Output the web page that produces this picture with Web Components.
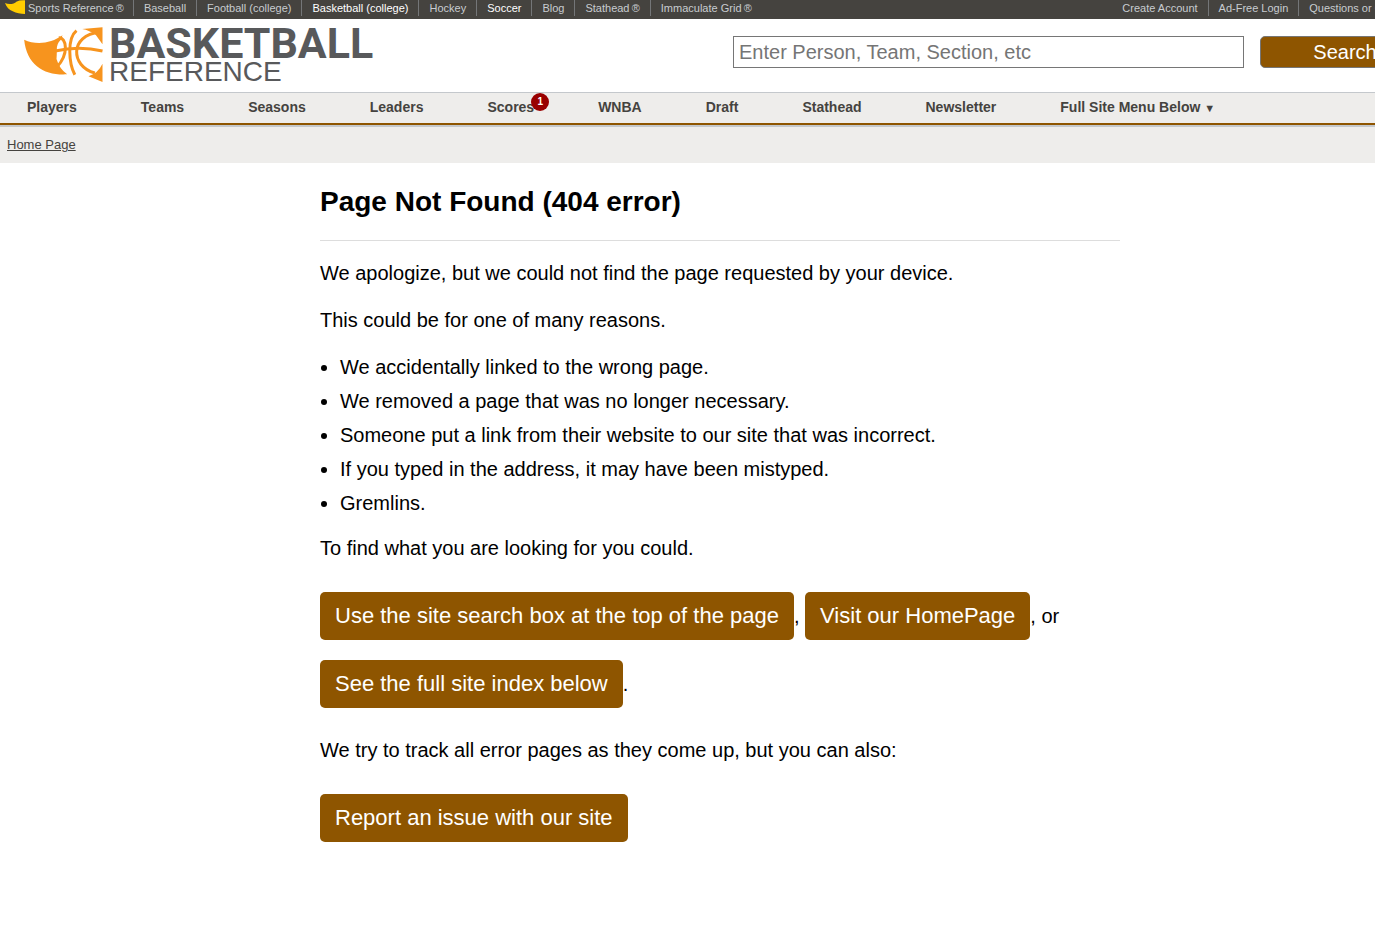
<!DOCTYPE html>
<html lang="en">
<head>
<meta charset="utf-8">
<title>Page Not Found (404 error) | Basketball-Reference.com</title>
<style>
  html { overflow-x: hidden; }
  body { margin: 0; background: #fff; color: #000; font-family: "Liberation Sans", Arial, Helvetica, sans-serif; overflow-x: hidden; }
</style>
</head>
<body>
<site-page></site-page>

<script>
const define = (name, html) => {
  const template = document.createElement('template');
  template.innerHTML = html;
  customElements.define(name, class extends HTMLElement {
    constructor() {
      super();
      this.attachShadow({ mode: 'open' }).append(template.content.cloneNode(true));
    }
  });
};

define('network-bar', `
  <style>
    :host { display: flex; justify-content: space-between; background: #45433f; height: 19px; font-size: 11px; line-height: 16px; white-space: nowrap; }
    ul { display: flex; list-style: none; margin: 0; padding: 0; }
    li { height: 16px; padding: 0 10px; }
    li + li { border-left: 1px solid #747678; }
    li.brand { display: flex; gap: 3px; padding: 0 9px 0 5px; }
    .account li:last-child { padding-right: 6px; }
    svg { display: block; width: 20px; height: 14px; }
    a { color: #c8ccd0; text-decoration: none; }
    a.on { color: #fff; }
  </style>
  <ul>
    <li class="brand"><svg viewBox="0 0 60 42" aria-hidden="true"><path fill="#fc0" d="M0 9C12 15 28 12 34 5Q44 0 60 1V42C34 40 8 34 0 9Z"/></svg><a href="#">Sports Reference&thinsp;®</a></li>
    <li><a href="#">Baseball</a></li>
    <li><a href="#">Football (college)</a></li>
    <li><a class="on" href="#">Basketball (college)</a></li>
    <li><a href="#">Hockey</a></li>
    <li><a class="on" href="#">Soccer</a></li>
    <li><a href="#">Blog</a></li>
    <li><a href="#">Stathead&thinsp;®</a></li>
    <li><a href="#">Immaculate Grid&thinsp;®</a></li>
  </ul>
  <ul class="account">
    <li><a href="#">Create Account</a></li>
    <li><a href="#">Ad-Free Login</a></li>
    <li><a href="#">Questions or Comments?</a></li>
  </ul>`);

define('site-logo', `
  <style>
    :host { display: block; }
    a { display: flex; gap: 6px; color: #58595b; text-decoration: none; white-space: nowrap; }
    svg { display: block; width: 79px; height: 56px; flex: none; }
    span { display: grid; align-content: start; }
    b { font: 700 43px/33px Roboto, sans-serif; }
    i { font: 400 28px/24px "Liberation Sans", sans-serif; }
  </style>
  <a href="#" aria-label="Basketball Reference home">
    <svg viewBox="0 0 236 168" aria-hidden="true">
      <path fill="#f7941e" d="M0 38C35 55 80 50 115 25L110 38Q97 50 98 68Q98 84 97 96Q106 126 129 142C62 146 8 116 0 38Z"/>
      <g fill="none" stroke="#f7941e" stroke-width="9">
        <path d="M104 32C126 30 136 80 98 120"/>
        <path d="M157 11C128 34 134 110 152 143"/>
        <path d="M226 16C136 24 138 118 212 138"/>
        <path d="M93 72Q165 56 235 72"/>
      </g>
      <path fill="#f7941e" d="M174 6L235 1V52L215 24Q196 10 174 6ZM235 110V165L193 148Q222 138 235 110Z"/>
    </svg>
    <span><b>BASKETBALL</b><i>REFERENCE</i></span>
  </a>`);

define('site-search', `
  <style>
    :host { display: block; width: 697px; }
    form { display: flex; gap: 16px; margin: 0; }
    input, button { box-sizing: border-box; height: 32px; font: 20px/24px "Liberation Sans", Arial, sans-serif; }
    input { flex: 1; min-width: 0; border: 1px solid #767676; border-radius: 0; padding: 0 5px; background: #fff; color: #000; }
    input::placeholder { color: #757575; }
    button { width: 170px; padding: 0; border: 1px solid #767676; border-radius: 5px; background: #8e5500; color: #fff; }
  </style>
  <form role="search" onsubmit="return false">
    <input type="search" aria-label="Search the site" placeholder="Enter Person, Team, Section, etc">
    <button type="submit">Search</button>
  </form>`);

define('main-nav', `
  <style>
    :host { display: block; background: #eeedeb; border-top: 1px solid #c4c8cc; border-bottom: 2px solid #8e5500; }
    ul { display: flex; list-style: none; margin: 0; padding: 0 27px; gap: 64px; height: 30px; }
    li { position: relative; white-space: nowrap; }
    a { color: #45433f; font-size: 14px; line-height: 28px; font-weight: 700; text-decoration: none; }
    .badge { position: absolute; left: 100%; top: 0; margin-left: -3px; width: 18px; height: 18px; border-radius: 50%; background: #900; color: #fff; font-size: 10px; line-height: 18px; font-weight: 700; text-align: center; }
    small { font-size: 11px; }
  </style>
  <nav><ul>
    <li><a href="#">Players</a></li>
    <li><a href="#">Teams</a></li>
    <li><a href="#">Seasons</a></li>
    <li><a href="#">Leaders</a></li>
    <li><a href="#">Scores</a><span class="badge">1</span></li>
    <li><a href="#">WNBA</a></li>
    <li><a href="#">Draft</a></li>
    <li><a href="#">Stathead</a></li>
    <li><a href="#">Newsletter</a></li>
    <li><a href="#">Full Site Menu Below <small>▼</small></a></li>
  </ul></nav>`);

define('bread-crumbs', `
  <style>
    :host { display: block; background: #eeedeb; border-top: 2px solid #c4c8cc; padding: 8px 7px; font-size: 13px; line-height: 20px; }
    a { color: #45433f; }
  </style>
  <nav aria-label="Breadcrumb"><a href="#">Home Page</a></nav>`);

define('action-link', `
  <style>
    :host { display: inline-block; }
    a { display: block; padding: 9px 15px; border-radius: 5px; background: #8e5500; color: #fff; font-size: 22px; line-height: 30px; text-decoration: none; }
  </style>
  <a href="#"><slot></slot></a>`);

define('not-found', `
  <style>
    :host { display: block; width: 800px; margin: 0 auto; padding-bottom: 60px; font-size: 20px; line-height: 27px; }
    h1 { margin: 0 0 19px; padding: 20px 0; border-bottom: 1px solid #ddd; font-size: 28px; line-height: 37px; }
    p { margin: 0 0 20px; }
    ul { display: grid; gap: 7px; margin: 0 0 18px; padding-left: 20px; }
    p.actions { margin-bottom: 19px; line-height: 68px; }
  </style>
  <h1>Page Not Found (404 error)</h1>
  <p>We apologize, but we could not find the page requested by your device.</p>
  <p>This could be for one of many reasons.</p>
  <ul>
    <li>We accidentally linked to the wrong page.</li>
    <li>We removed a page that was no longer necessary.</li>
    <li>Someone put a link from their website to our site that was incorrect.</li>
    <li>If you typed in the address, it may have been mistyped.</li>
    <li>Gremlins.</li>
  </ul>
  <p>To find what you are looking for you could.</p>
  <p class="actions"><action-link>Use the site search box at the top of the page</action-link>, <action-link>Visit our HomePage</action-link>, or <action-link>See the full site index below</action-link>.</p>
  <p>We try to track all error pages as they come up, but you can also:</p>
  <p class="actions"><action-link>Report an issue with our site</action-link></p>`);

define('site-page', `
  <style>
    :host { display: block; min-width: 1440px; }
    header { display: flex; justify-content: space-between; padding: 8px 10px 8px 24px; }
    site-search { padding-top: 9px; }
  </style>
  <network-bar></network-bar>
  <header><site-logo></site-logo><site-search></site-search></header>
  <main-nav></main-nav>
  <bread-crumbs></bread-crumbs>
  <main><not-found></not-found></main>`);
</script>
</body>
</html>
